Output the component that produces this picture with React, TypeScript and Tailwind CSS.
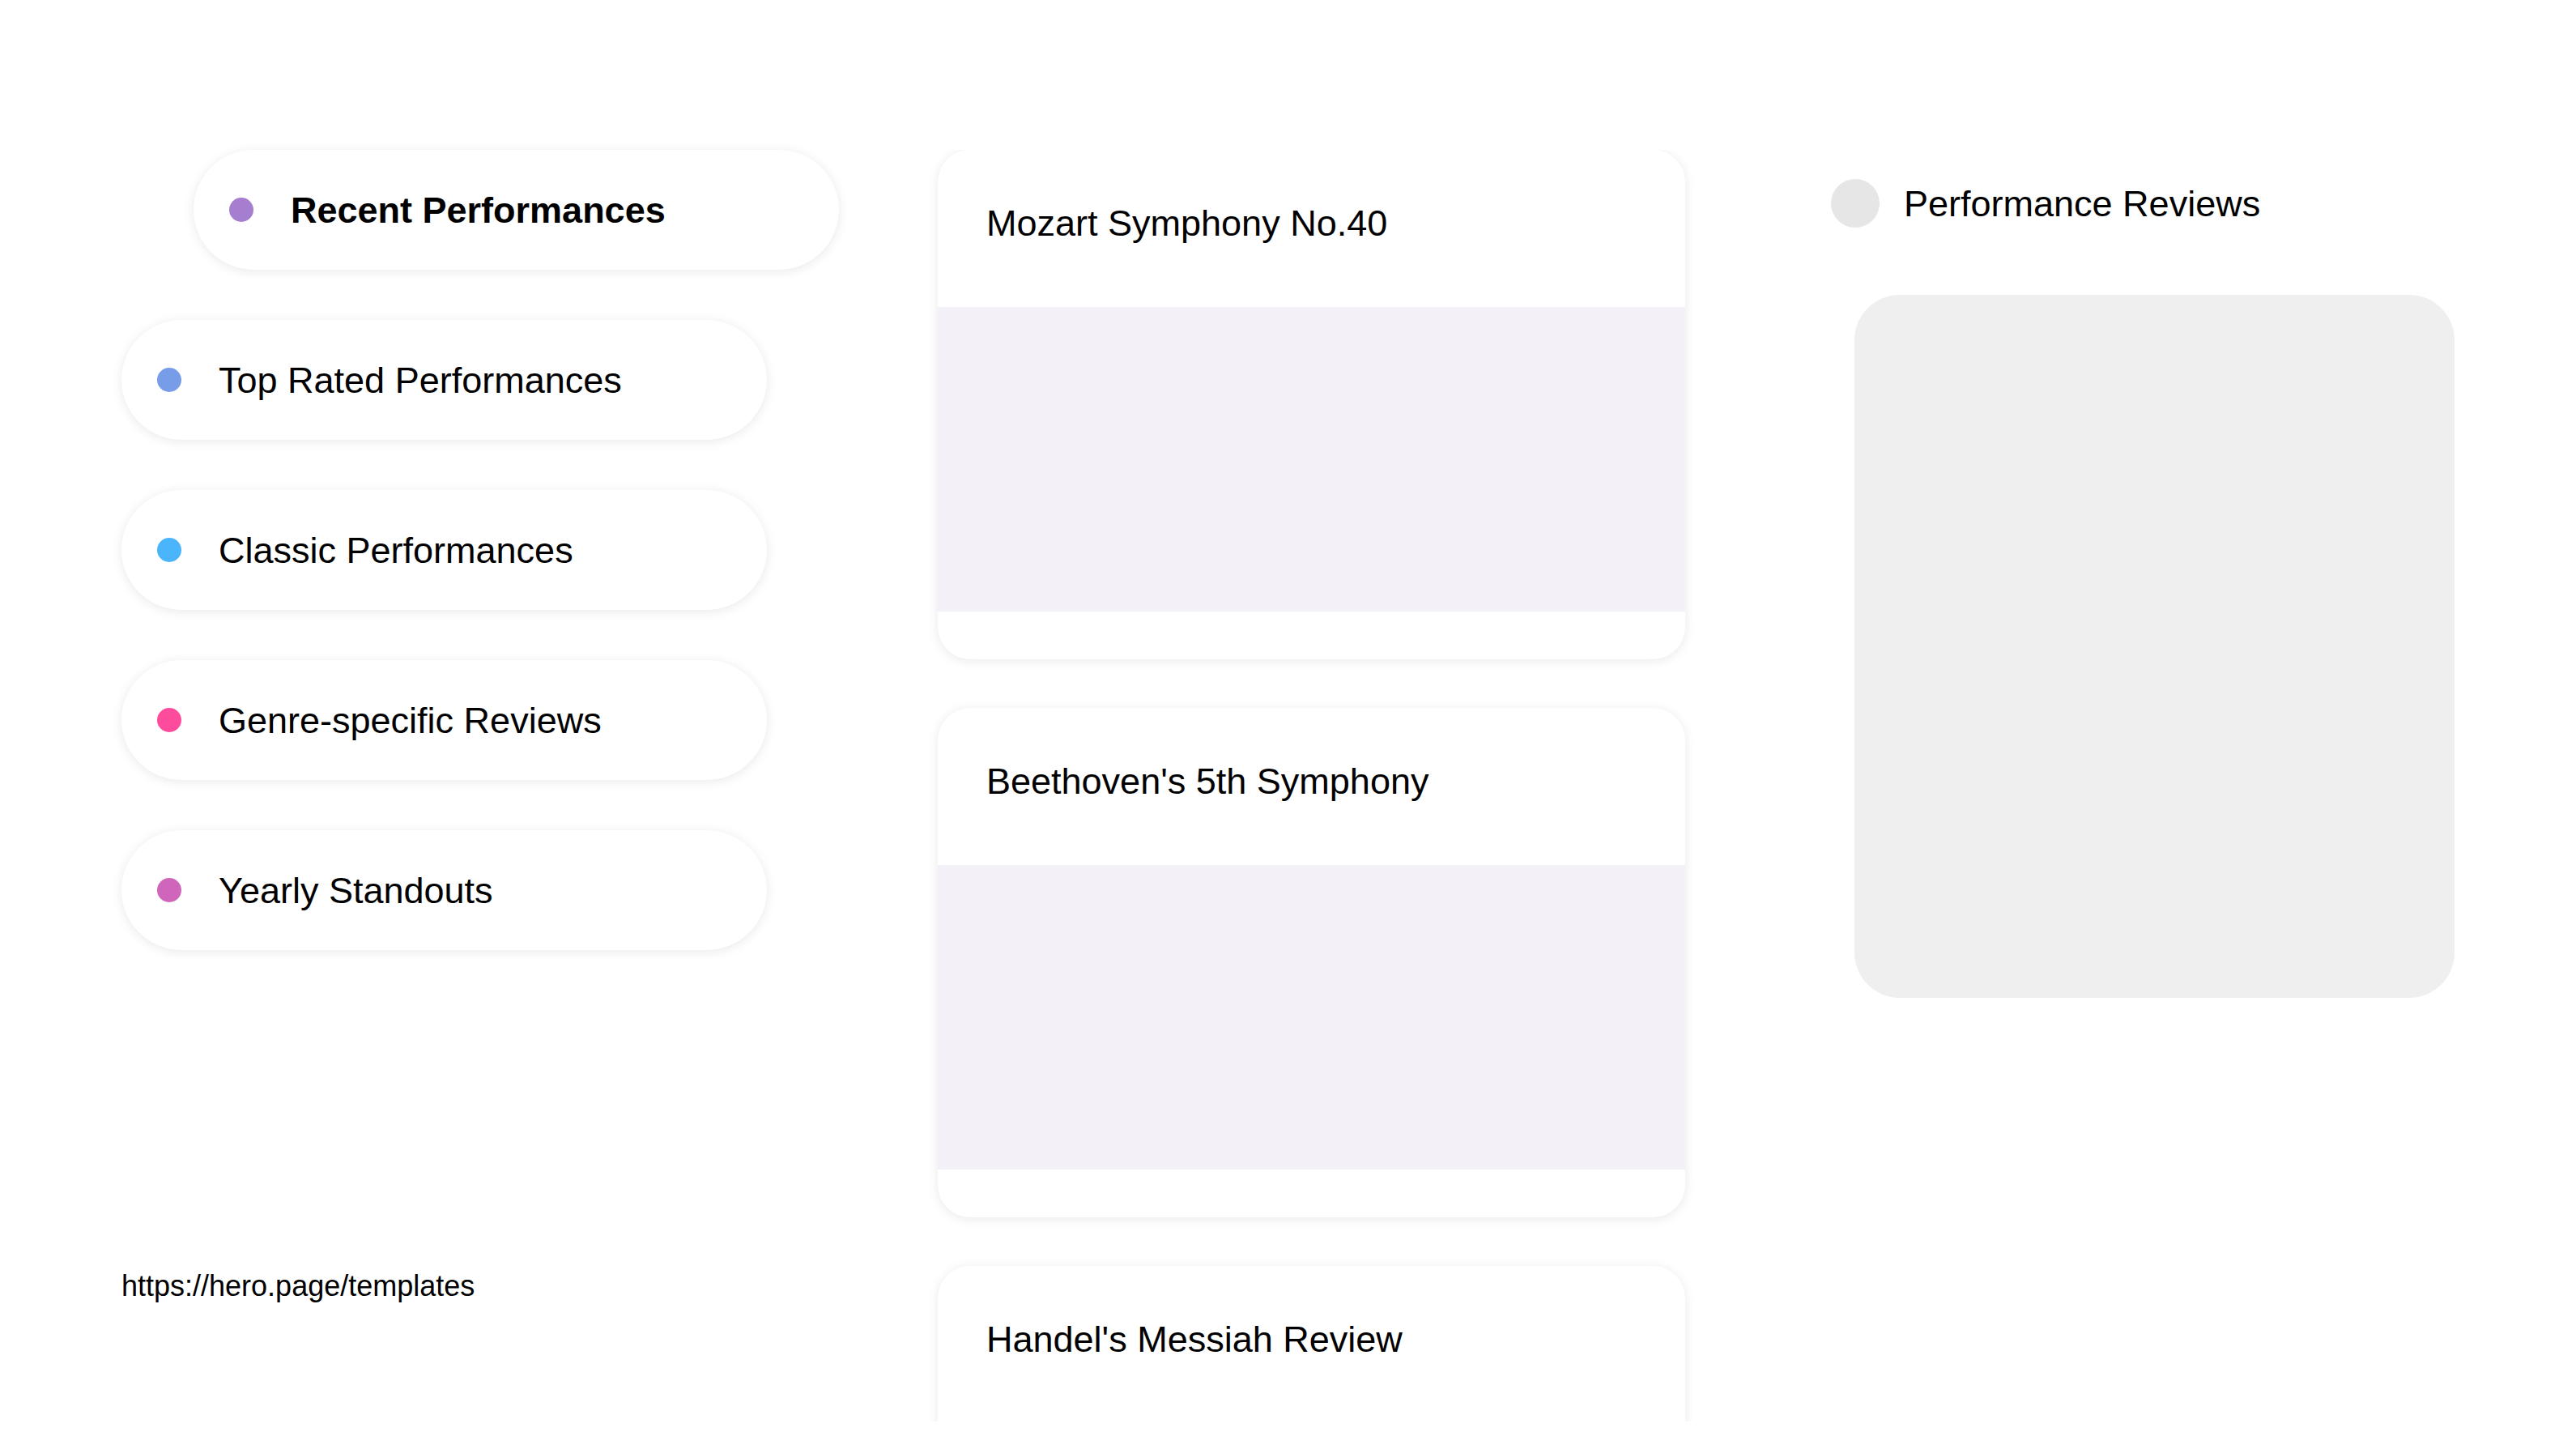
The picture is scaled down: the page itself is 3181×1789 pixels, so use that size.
import React from "react";

// Sidebar categories for the reviews board
const categories = [
  { label: "Recent Performances", dot: "bg-[#a67ed0]", active: true },
  { label: "Top Rated Performances", dot: "bg-[#789de8]", active: false },
  { label: "Classic Performances", dot: "bg-[#4ab5fb]", active: false },
  { label: "Genre-specific Reviews", dot: "bg-[#fe4c9d]", active: false },
  { label: "Yearly Standouts", dot: "bg-[#cf66bb]", active: false },
];

const performances = [
  "Mozart Symphony No.40",
  "Beethoven's 5th Symphony",
  "Handel's Messiah Review",
];

function CategoryPill({
  label,
  dot,
  active,
}: {
  label: string;
  dot: string;
  active: boolean;
}) {
  return (
    <div
      className={`flex h-[148px] w-[797px] shrink-0 items-center gap-[46px] rounded-full bg-white pl-[44px] shadow-[0_2px_14px_rgba(0,0,0,0.09)] ${
        active ? "ml-[89px]" : ""
      }`}
    >
      <span className={`h-[30px] w-[30px] shrink-0 rounded-full ${dot}`} />
      <span
        className={`text-[45px] leading-none text-black ${
          active ? "font-bold" : "font-normal"
        }`}
      >
        {label}
      </span>
    </div>
  );
}

function PerformanceCard({ title }: { title: string }) {
  return (
    <div className="flex w-[923px] shrink-0 flex-col overflow-hidden rounded-[40px] bg-white shadow-[0_2px_14px_rgba(0,0,0,0.09)]">
      {/* Title */}
      <div className="h-[194px] px-[60px] pt-[64px]">
        <h2 className="text-[45px] font-normal leading-[1.2] text-black">{title}</h2>
      </div>
      {/* Media placeholder */}
      <div className="h-[376px] bg-[#f3f1f7]" />
      <div className="h-[59px]" />
    </div>
  );
}

export default function App() {
  return (
    <div className="h-[1789px] w-full overflow-hidden bg-white font-['Liberation_Sans',Arial,sans-serif]">
      <div className="flex pl-[150px] pt-[185px]">
        {/* ── LEFT: category list ── */}
        <div className="flex w-[797px] shrink-0 flex-col">
          <div className="flex flex-col gap-[62px]">
            {categories.map((c) => (
              <CategoryPill key={c.label} {...c} />
            ))}
          </div>
          <p className="mt-[394px] text-[36px] leading-[1.15] text-black">
            https://hero.page/templates
          </p>
        </div>

        {/* ── MIDDLE: performance cards ── */}
        <div className="ml-[191px] h-[1570px] shrink-0 overflow-hidden px-[20px]">
          <div className="flex flex-col gap-[60px]">
            {performances.map((p) => (
              <PerformanceCard key={p} title={p} />
            ))}
          </div>
        </div>

        {/* ── RIGHT: reviews panel ── */}
        <div className="ml-[160px] flex w-[770px] shrink-0 flex-col pt-[36px]">
          <div className="flex items-center gap-[30px]">
            <span className="h-[60px] w-[60px] shrink-0 rounded-full bg-[#e6e6e6]" />
            <span className="text-[45px] leading-none text-black">Performance Reviews</span>
          </div>
          <div className="ml-[29px] mt-[83px] h-[868px] w-[741px] rounded-[56px] bg-[#efefef]" />
        </div>
      </div>
    </div>
  );
}
